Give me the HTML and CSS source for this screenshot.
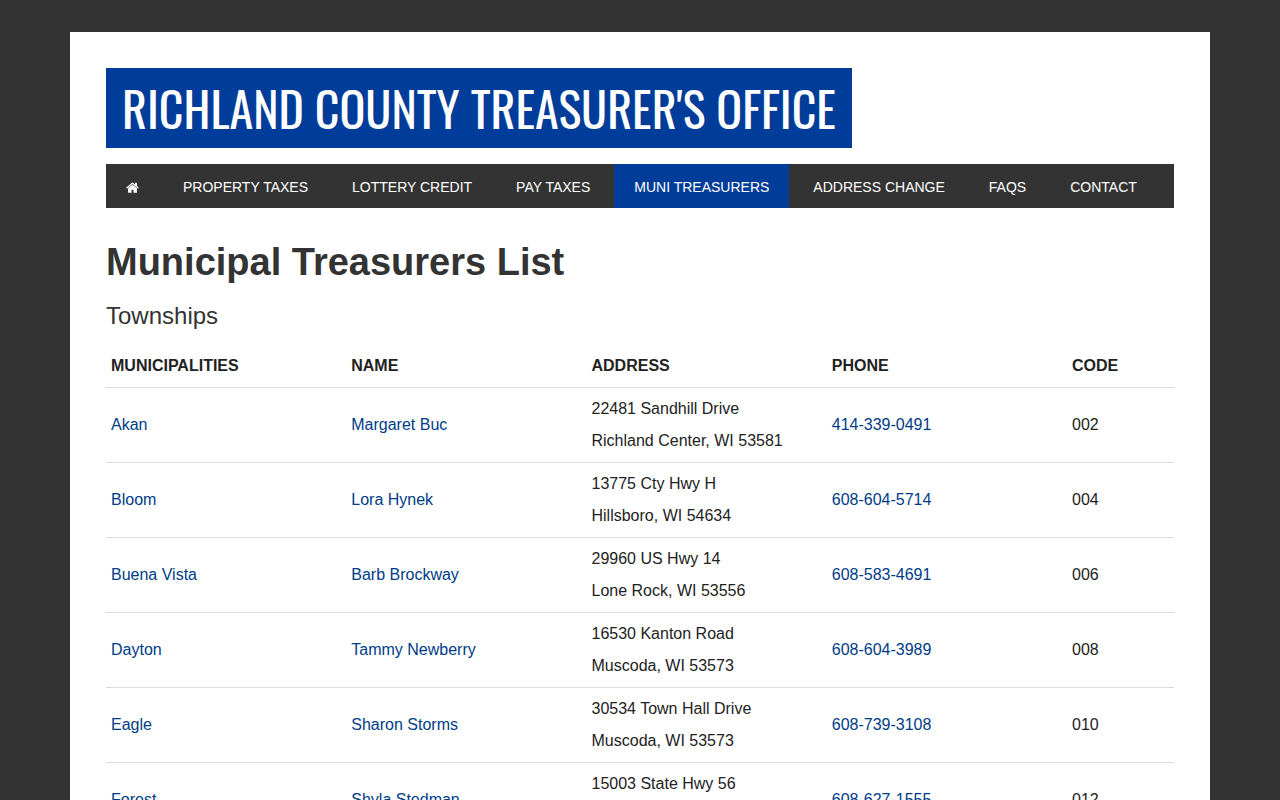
FILE: index.html
```html
<!DOCTYPE html>
<html lang="en">
<head>
<meta charset="utf-8">
<meta name="viewport" content="width=device-width, initial-scale=1">
<title>Municipal Treasurers List</title>
<link rel="stylesheet" href="styles.css">
</head>
<body>
<div class="page">
  <header class="site-header">
    <a class="site-title" href="#">RICHLAND COUNTY TREASURER'S OFFICE</a>
    <nav class="main-nav" aria-label="Main">
      <a href="#" aria-label="Home"><svg class="home-icon" viewBox="0 0 1664 1312" aria-hidden="true"><path fill="currentColor" d="M1408 768v480q0 26-19 45t-45 19H960V928H704v384H320q-26 0-45-19t-19-45V768q0-1 .5-3t.5-3l575-474 575 474q1 2 1 6zm223-69l-62 74q-8 9-21 11h-3q-13 0-21-7L832 200 140 777q-12 8-24 7-13-2-21-11l-62-74q-8-10-7-23.500T37 654L756 55q32-26 76-26t76 26l244 204V64q0-14 9-23t23-9h192q14 0 23 9t9 23v408l219 182q10 8 11 21.500t-7 23.500z"/></svg></a>
      <a href="#">PROPERTY TAXES</a>
      <a href="#">LOTTERY CREDIT</a>
      <a href="#">PAY TAXES</a>
      <a class="active" href="#" aria-current="page">MUNI TREASURERS</a>
      <a href="#">ADDRESS CHANGE</a>
      <a href="#">FAQS</a>
      <a href="#">CONTACT</a>
    </nav>
  </header>
  <main>
    <h1>Municipal Treasurers List</h1>
    <h2>Townships</h2>
    <table class="treasurers">
      <thead>
        <tr><th scope="col">MUNICIPALITIES</th><th scope="col">NAME</th><th scope="col">ADDRESS</th><th scope="col">PHONE</th><th scope="col" class="code">CODE</th></tr>
      </thead>
      <tbody>
        <tr><td><a href="#">Akan</a></td><td><a href="#">Margaret Buc</a></td><td class="address">22481 Sandhill Drive<br>Richland Center, WI 53581</td><td><a href="tel:4143390491">414-339-0491</a></td><td>002</td></tr>
        <tr><td><a href="#">Bloom</a></td><td><a href="#">Lora Hynek</a></td><td class="address">13775 Cty Hwy H<br>Hillsboro, WI 54634</td><td><a href="tel:6086045714">608-604-5714</a></td><td>004</td></tr>
        <tr><td><a href="#">Buena Vista</a></td><td><a href="#">Barb Brockway</a></td><td class="address">29960 US Hwy 14<br>Lone Rock, WI 53556</td><td><a href="tel:6085834691">608-583-4691</a></td><td>006</td></tr>
        <tr><td><a href="#">Dayton</a></td><td><a href="#">Tammy Newberry</a></td><td class="address">16530 Kanton Road<br>Muscoda, WI 53573</td><td><a href="tel:6086043989">608-604-3989</a></td><td>008</td></tr>
        <tr><td><a href="#">Eagle</a></td><td><a href="#">Sharon Storms</a></td><td class="address">30534 Town Hall Drive<br>Muscoda, WI 53573</td><td><a href="tel:6087393108">608-739-3108</a></td><td>010</td></tr>
        <tr><td><a href="#">Forest</a></td><td><a href="#">Shyla Stedman</a></td><td class="address">15003 State Hwy 56</td><td><a href="tel:6086271555">608-627-1555</a></td><td>012</td></tr>
      </tbody>
    </table>
  </main>
</div>
</body>
</html>
```
FILE: styles.css
```css
* { box-sizing: border-box; }
html { scrollbar-width: none; }
body {
  margin: 0;
  padding: 32px 16px;
  background: #333;
  color: #222;
  font: 16px/32px "Liberation Sans", Arial, sans-serif;
}
a { color: #003c99; text-decoration: none; }
.page {
  max-width: 1140px;
  margin: 0 auto;
  padding: 36px;
  background: #fff;
}
.site-header {
  display: flex;
  flex-direction: column;
  align-items: flex-start;
  gap: 16px;
}
.site-title {
  padding: 0 16px;
  background: #003c99;
  color: #fff;
  font: 48px/80px Oswald, "Liberation Sans Narrow", "Liberation Sans", sans-serif;
}
.main-nav {
  display: flex;
  flex-wrap: wrap;
  gap: 4px;
  width: 100%;
  background: #333;
  font-size: 14px;
  line-height: 42px;
}
.main-nav a {
  display: flex;
  align-items: center;
  padding: 2px 20px 0;
  color: #fff;
}
.main-nav .active { background: #003c99; }
.home-icon { width: 13px; height: 11px; }
h1 {
  margin: 32px 0 0;
  color: #333;
  font-size: 38px;
  line-height: 44px;
}
h2 {
  margin: 16px 0 13px;
  color: #333;
  font-size: 24px;
  font-weight: 400;
  line-height: 32px;
}
.treasurers {
  width: 100%;
  border-collapse: collapse;
  table-layout: fixed;
}
.treasurers th, .treasurers td {
  padding: 5px;
  border-bottom: 1px solid #ddd;
  text-align: left;
}
.treasurers tbody tr { height: 75px; }
.treasurers .address { vertical-align: top; }
.treasurers .code { width: 107px; }
.treasurers a { color: #003c88; }
```
